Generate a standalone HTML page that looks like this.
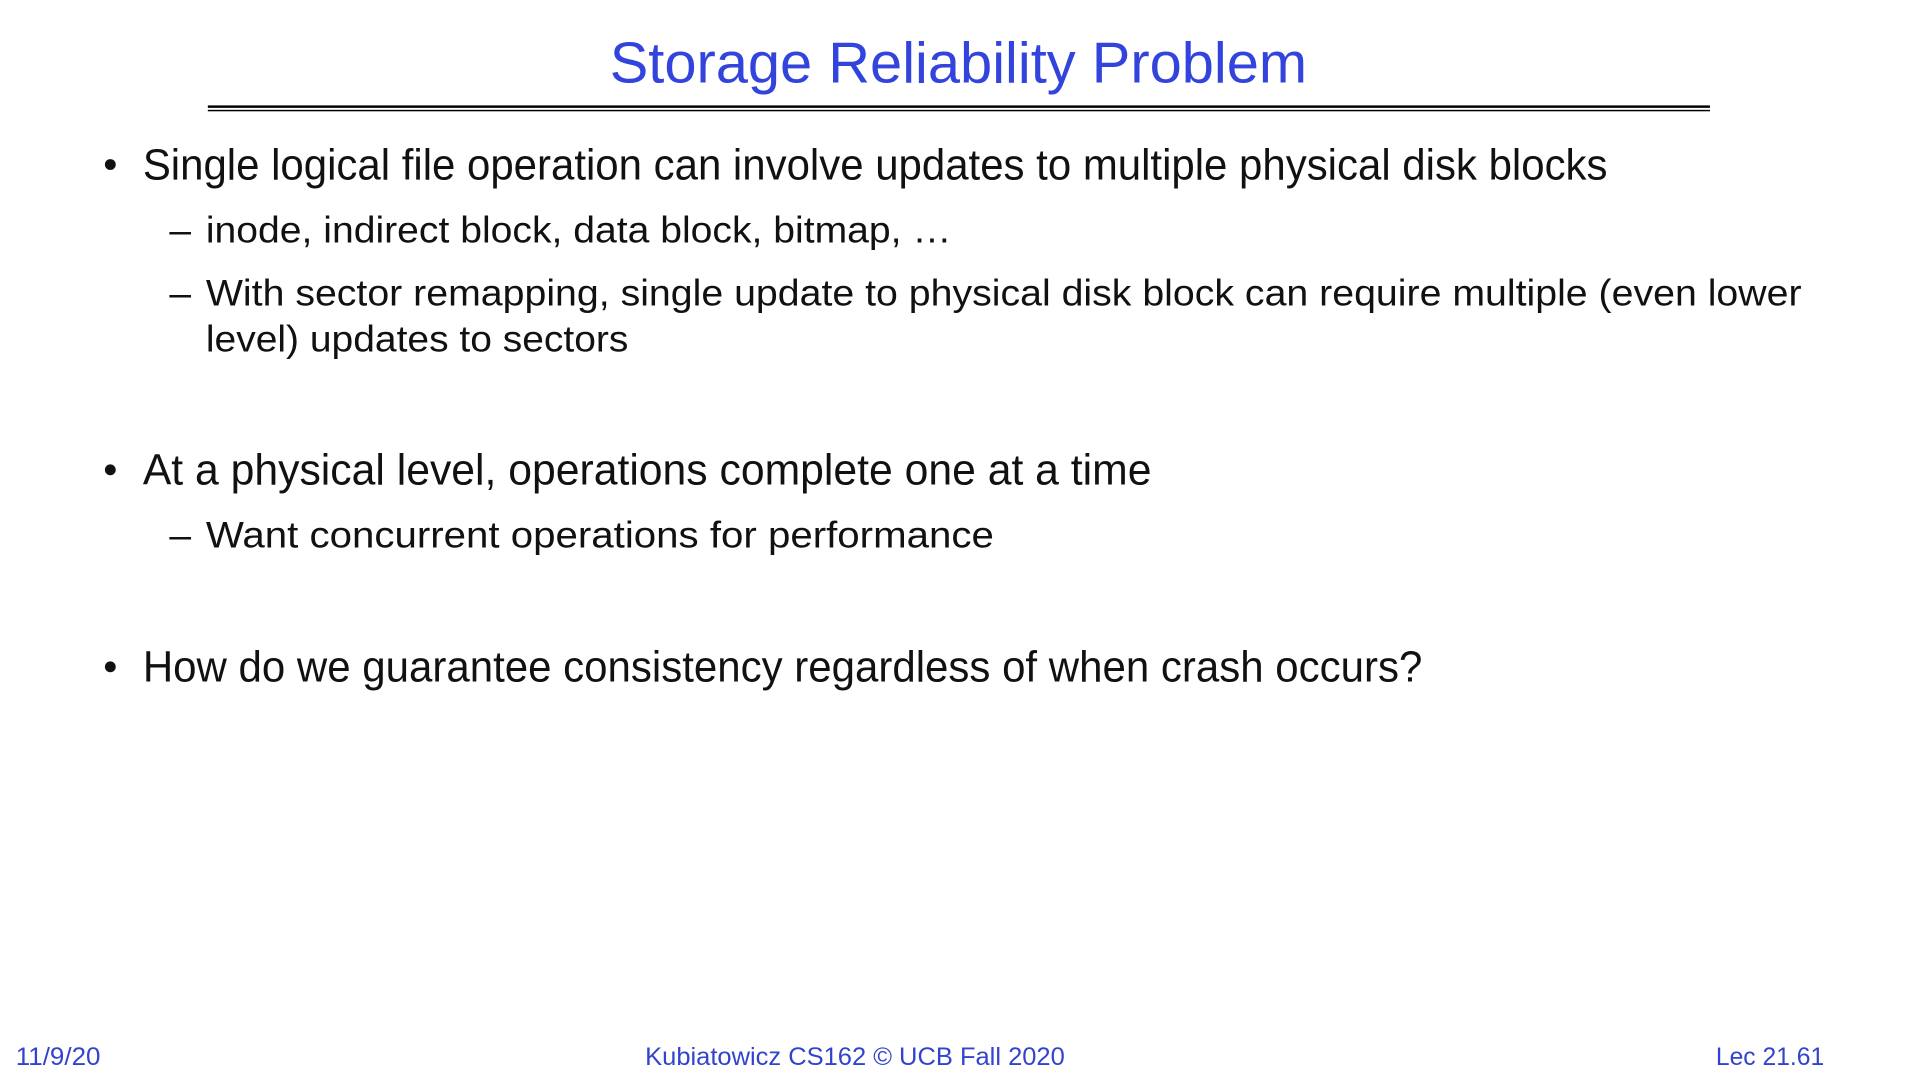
<!DOCTYPE html>
<html><head><meta charset="utf-8"><style>
html,body{margin:0;padding:0;background:#fff;width:1920px;height:1080px;overflow:hidden}
svg{display:block}
text{font-family:"Liberation Sans",sans-serif}
</style></head><body>
<svg width="1920" height="1080" viewBox="0 0 1920 1080" xmlns="http://www.w3.org/2000/svg">
<g transform="scale(0.985)">
<text x="619" y="84" font-size="58" fill="#3344dd" textLength="708" lengthAdjust="spacingAndGlyphs">Storage Reliability Problem</text>
<rect x="211" y="107" width="1525" height="2.5" fill="#000"/>
<rect x="211" y="111.5" width="1525" height="1.5" fill="#000"/>
<g fill="#111">
<circle cx="112" cy="167" r="5.5"/>
<text x="145" y="182" font-size="44" textLength="1487" lengthAdjust="spacingAndGlyphs">Single logical file operation can involve updates to multiple physical disk blocks</text>
<text x="172" y="246" font-size="38" textLength="22" lengthAdjust="spacingAndGlyphs">–</text>
<text x="209" y="246" font-size="38" textLength="757" lengthAdjust="spacingAndGlyphs">inode, indirect block, data block, bitmap, …</text>
<text x="172" y="310" font-size="38" textLength="22" lengthAdjust="spacingAndGlyphs">–</text>
<text x="209" y="310" font-size="38" textLength="1620" lengthAdjust="spacingAndGlyphs">With sector remapping, single update to physical disk block can require multiple (even lower</text>
<text x="209" y="357" font-size="38" textLength="429" lengthAdjust="spacingAndGlyphs">level) updates to sectors</text>
<circle cx="112" cy="477" r="5.5"/>
<text x="145" y="492" font-size="44" textLength="1024" lengthAdjust="spacingAndGlyphs">At a physical level, operations complete one at a time</text>
<text x="172" y="556" font-size="38" textLength="22" lengthAdjust="spacingAndGlyphs">–</text>
<text x="209" y="556" font-size="38" textLength="800" lengthAdjust="spacingAndGlyphs">Want concurrent operations for performance</text>
<circle cx="112" cy="677" r="5.5"/>
<text x="145" y="692" font-size="44" textLength="1299" lengthAdjust="spacingAndGlyphs">How do we guarantee consistency regardless of when crash occurs?</text>
</g>
</g>
<g fill="#3344cc" font-size="25" transform="scale(0.985,1)">
<text x="16" y="1065" textLength="86" lengthAdjust="spacingAndGlyphs">11/9/20</text>
<text x="655" y="1065" textLength="426" lengthAdjust="spacingAndGlyphs">Kubiatowicz CS162 © UCB Fall 2020</text>
<text x="1742" y="1065" textLength="110" lengthAdjust="spacingAndGlyphs">Lec 21.61</text>
</g>
</svg>
</body></html>
